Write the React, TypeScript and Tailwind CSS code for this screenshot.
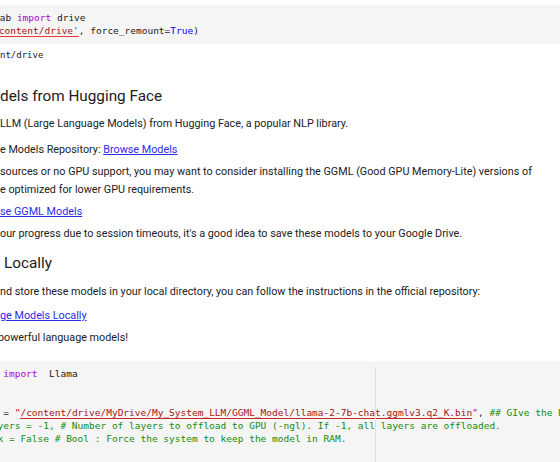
import React from "react";

const mono = "font-['DejaVu_Sans_Mono',monospace]";

export default function App() {
  return (
    <div className="w-[560px] h-[462px] overflow-hidden bg-white relative font-['Roboto',sans-serif] text-[#212121]">
      <div className="h-[5px]" />
      {/* top code cell */}
      <div className={`bg-[#f5f5f5] pt-[6px] pb-[7px] ${mono} text-[9.5px] leading-[13px] text-[#212121]`}>
        <div className="ml-[-6px] whitespace-pre">
          lab <span className="text-[#af00db]">import</span> drive
        </div>
        <div className="ml-[-7px] whitespace-pre">
          <span className="text-[#a31515] border-b border-[#e53935]">/content/drive'</span>, force_remount=<span className="text-[#0000ff]">True</span>)
        </div>
      </div>
      {/* output */}
      <div className={`pt-[4px] ${mono} text-[9px] leading-[14px] text-[#212121] whitespace-pre`}>nt/drive</div>

      {/* markdown */}
      <div className="flex flex-col whitespace-nowrap">
        <div className="mt-[23px] text-[15.3px] leading-[22px] text-[#212121]">dels from Hugging Face</div>
        <div className="mt-[8px] text-[10.8px] leading-[18px]">LLM (Large Language Models) from Hugging Face, a popular NLP library.</div>
        <div className="mt-[8px] text-[10.8px] leading-[18px]">
          e Models Repository: <span className="text-[#2a2ae8] underline">Browse Models</span>
        </div>
        <div className="mt-[4px] text-[10.8px] leading-[18px]">
          <div>sources or no GPU support, you may want to consider installing the GGML (Good GPU Memory-Lite) versions of</div>
          <div>e optimized for lower GPU requirements.</div>
        </div>
        <div className="mt-[4px] text-[10.8px] leading-[18px]">
          <span className="text-[#2a2ae8] underline">se GGML Models</span>
        </div>
        <div className="mt-[4px] text-[10.8px] leading-[18px]">our progress due to session timeouts, it's a good idea to save these models to your Google Drive.</div>
        <div className="mt-[9px] text-[15.3px] leading-[22px] pl-[4px]">Locally</div>
        <div className="mt-[9px] text-[10.8px] leading-[18px]">nd store these models in your local directory, you can follow the instructions in the official repository:</div>
        <div className="mt-[6px] text-[10.8px] leading-[18px]">
          <span className="text-[#2a2ae8] underline">ge Models Locally</span>
        </div>
        <div className="mt-[4px] text-[10.8px] leading-[18px] ml-[-2px]">powerful language models!</div>
      </div>

      {/* lower code cell */}
      <div className={`relative mt-[14px] bg-[#f5f5f5] pt-[6px] pb-[20px] ${mono} text-[9.5px] leading-[13px] text-[#212121]`}>
        <div className="absolute left-[375px] top-[6px] bottom-0 w-px bg-[#dedede]" />
        <div className="ml-[-2.5px] whitespace-pre">
          {" "}<span className="text-[#af00db]">import</span>  Llama
        </div>
        <div className="h-[13px]" />
        <div className="h-[13px]" />
        <div className="ml-[-2.5px] whitespace-pre">
          {" = "}<span className="text-[#a31515]">"<span className="border-b border-[#c62828]">/content/drive/MyDrive/My_System_LLM/GGML_Model/llama-2-7b-chat.ggmlv3.q2_K.bin</span>"</span>, <span className="text-[#148a14]">## GIve the PATH of the model</span>
        </div>
        <div className="ml-[-2.5px] whitespace-pre text-[#148a14]">yers = -1, # Number of layers to offload to GPU (-ngl). If -1, all layers are offloaded.</div>
        <div className="ml-[-2.5px] whitespace-pre text-[#148a14]">k = False # Bool : Force the system to keep the model in RAM.</div>
      </div>
    </div>
  );
}
